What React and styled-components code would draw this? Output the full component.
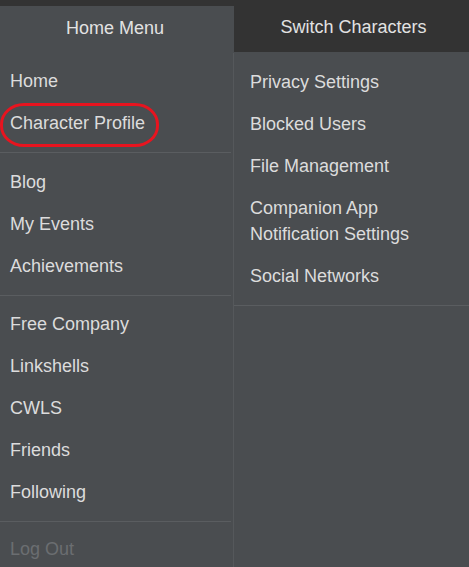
import React from "react";
import styled, { createGlobalStyle } from "styled-components";

const GlobalStyle = createGlobalStyle`
  html, body {
    margin: 0;
    padding: 0;
    background: #4a4d50;
  }
  body {
    font-family: "Liberation Sans", Arial, sans-serif;
  }
`;

const Menu = styled.div`
  width: 469px;
  height: 567px;
  overflow: hidden;
  background: #4a4d50;
  display: flex;
  flex-direction: column;
`;

const Tabs = styled.div`
  display: flex;
  flex-shrink: 0;
  height: 52px;
  background: #333333;
`;

const Tab = styled.div`
  width: ${(p) => (p.$active ? "234px" : "auto")};
  flex: ${(p) => (p.$active ? "none" : "1")};
  margin-top: ${(p) => (p.$active ? "6px" : "0")};
  background: ${(p) => (p.$active ? "#4a4d50" : "transparent")};
  color: #e2e2e2;
  font-size: 18px;
  display: flex;
  align-items: center;
  justify-content: center;
  padding: ${(p) => (p.$active ? "0 4px 2px 0" : "3px 0 0 4px")};
  box-sizing: border-box;
`;

const Columns = styled.div`
  display: flex;
  flex: 1;
  min-height: 0;
`;

const Column = styled.div`
  width: ${(p) => p.$width};
  flex: ${(p) => (p.$grow ? "1" : "none")};
  border-right: ${(p) => (p.$divider ? "1px solid #55585b" : "none")};
  margin-top: ${(p) => (p.$divider ? "1px" : "0")};
`;

const Group = styled.ul`
  list-style: none;
  margin: 0;
  padding: ${(p) => p.$top || "8px"} 0 8px;
  border-bottom: ${(p) => (p.$last ? "none" : "1px solid #5a5d60")};
  margin-right: ${(p) => (p.$inset ? "2px" : "0")};
`;

const Item = styled.li`
  position: relative;
  padding: 8px 0 8px ${(p) => p.$pad || "10px"};
  line-height: 26px;
  font-size: 18px;
  color: ${(p) => (p.$muted ? "#6b6e71" : "#dcdcdc")};
`;

const Circle = styled.span`
  position: absolute;
  left: 0;
  top: 1px;
  width: 159px;
  height: 44px;
  box-sizing: border-box;
  border: 3px solid #e8141f;
  border-radius: 24px / 21px;
  pointer-events: none;
`;

export default function App() {
  return (
    <>
      <GlobalStyle />
      <Menu>
        <Tabs>
          <Tab $active>Home Menu</Tab>
          <Tab>Switch Characters</Tab>
        </Tabs>
        <Columns>
          <Column $width="233px" $divider>
            <Group $top="7px" $inset>
              <Item>Home</Item>
              <Item>
                Character Profile
                <Circle />
              </Item>
            </Group>
            <Group $inset>
              <Item>Blog</Item>
              <Item>My Events</Item>
              <Item>Achievements</Item>
            </Group>
            <Group $top="7px" $inset>
              <Item>Free Company</Item>
              <Item>Linkshells</Item>
              <Item>CWLS</Item>
              <Item>Friends</Item>
              <Item>Following</Item>
            </Group>
            <Group $top="6px" $last>
              <Item $muted>Log Out</Item>
            </Group>
          </Column>
          <Column $grow>
            <Group $top="9px">
              <Item $pad="16px">Privacy Settings</Item>
              <Item $pad="16px">Blocked Users</Item>
              <Item $pad="16px">File Management</Item>
              <Item $pad="16px">
                Companion App
                <br />
                Notification Settings
              </Item>
              <Item $pad="16px">Social Networks</Item>
            </Group>
          </Column>
        </Columns>
      </Menu>
    </>
  );
}
